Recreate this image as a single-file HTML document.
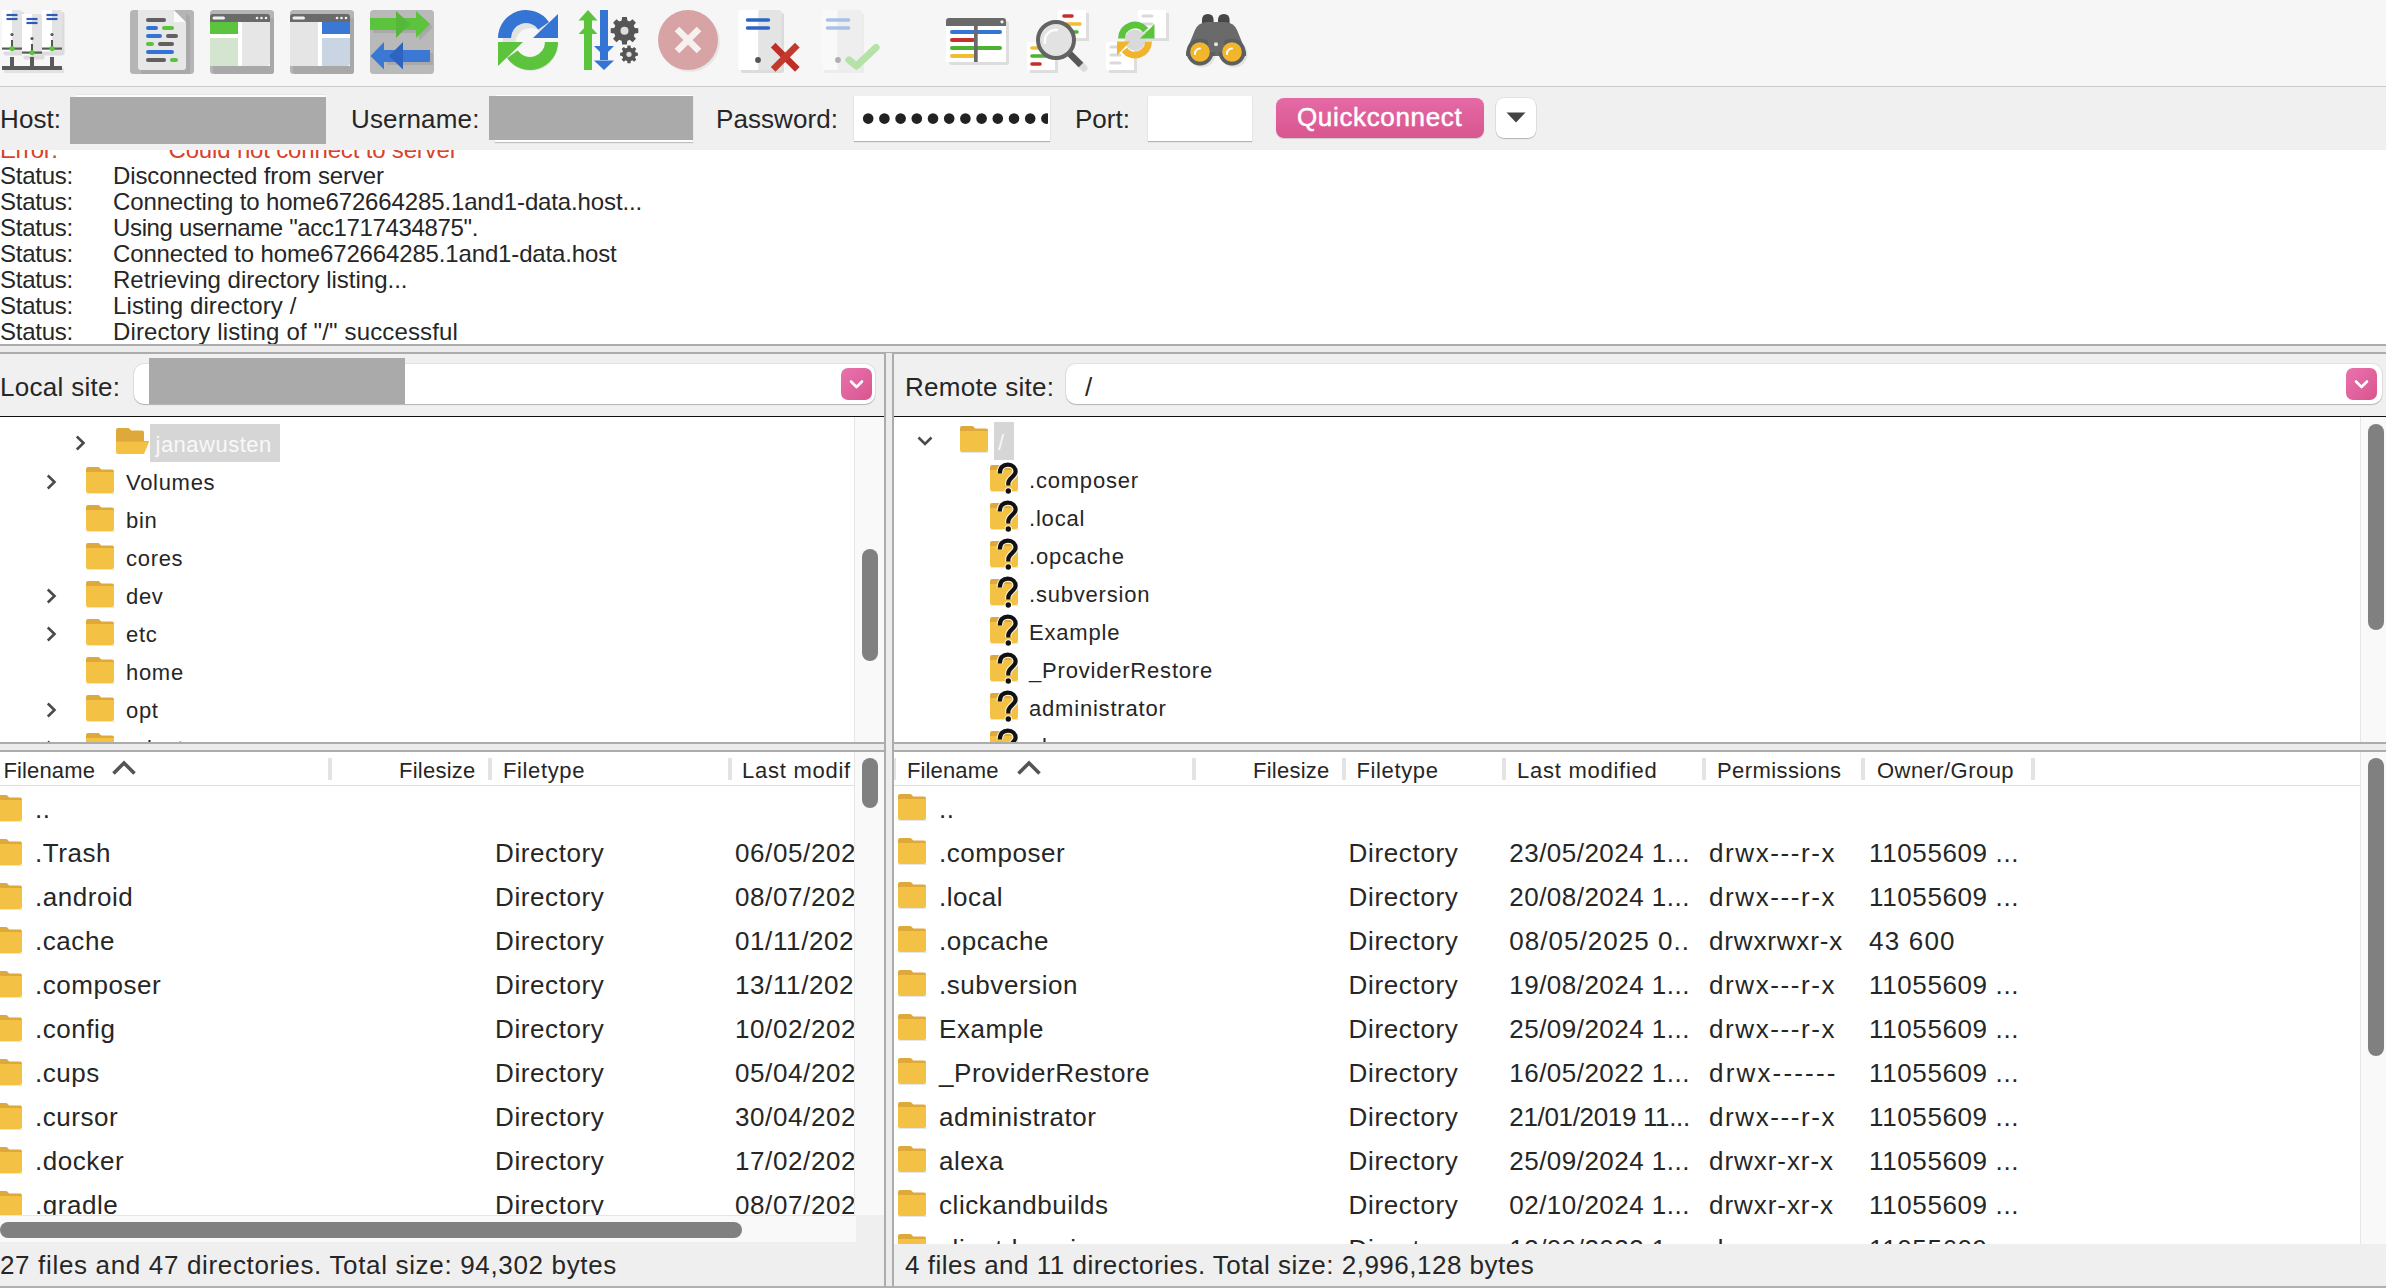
<!DOCTYPE html><html><head><meta charset="utf-8"><style>
html,body{margin:0;padding:0;overflow:hidden;}
body{width:2386px;height:1288px;position:relative;background:#fff;font-family:"Liberation Sans",sans-serif;}
.t{position:absolute;white-space:nowrap;line-height:1;}
.r{position:absolute;}
svg{position:absolute;overflow:visible;}
</style></head><body>
<div class="r" style="left:0px;top:0px;width:2386px;height:86px;background:#f6f6f6;"></div>
<svg style="left:0;top:0" width="1270" height="86" viewBox="0 0 1270 86"><rect x="4" y="68" width="60" height="5" rx="0" fill="#e2e2e2" /><rect x="3.5" y="12" width="21" height="43.5" rx="2" fill="#dcdcdc" /><rect x="2" y="10" width="10" height="41.5" rx="0" fill="#ffffff" /><path d="M12 10 H20 Q22 10 22 12 V51.5 H12 Z" fill="#e3e3e3" /><line x1="6.5" y1="15" x2="17.5" y2="15" stroke="#2c5db3" stroke-width="2.2" stroke-linecap="butt"/><line x1="6.5" y1="19" x2="17.5" y2="19" stroke="#2c5db3" stroke-width="2.2" stroke-linecap="butt"/><circle cx="12" cy="34.5" r="1.6" fill="#555" /><rect x="11" y="40.0" width="2" height="8" rx="0" fill="#555" /><rect x="2" y="47.5" width="20" height="2.2" rx="0" fill="#5a5a5a" /><circle cx="12" cy="48.6" r="2.6" fill="#5cc33d" /><rect x="23.5" y="16" width="21" height="43.5" rx="2" fill="#dcdcdc" /><rect x="22" y="14" width="10" height="41.5" rx="0" fill="#ffffff" /><path d="M32 14 H40 Q42 14 42 16 V55.5 H32 Z" fill="#e3e3e3" /><line x1="26.5" y1="19" x2="37.5" y2="19" stroke="#2c5db3" stroke-width="2.2" stroke-linecap="butt"/><line x1="26.5" y1="23" x2="37.5" y2="23" stroke="#2c5db3" stroke-width="2.2" stroke-linecap="butt"/><circle cx="32" cy="38.5" r="1.6" fill="#555" /><rect x="31" y="44.0" width="2" height="8" rx="0" fill="#555" /><rect x="22" y="51.5" width="20" height="2.2" rx="0" fill="#5a5a5a" /><circle cx="32" cy="52.6" r="2.6" fill="#5cc33d" /><rect x="43.5" y="12" width="21" height="43.5" rx="2" fill="#dcdcdc" /><rect x="42" y="10" width="10" height="41.5" rx="0" fill="#ffffff" /><path d="M52 10 H60 Q62 10 62 12 V51.5 H52 Z" fill="#e3e3e3" /><line x1="46.5" y1="15" x2="57.5" y2="15" stroke="#2c5db3" stroke-width="2.2" stroke-linecap="butt"/><line x1="46.5" y1="19" x2="57.5" y2="19" stroke="#2c5db3" stroke-width="2.2" stroke-linecap="butt"/><circle cx="52" cy="34.5" r="1.6" fill="#555" /><rect x="51" y="40.0" width="2" height="8" rx="0" fill="#555" /><rect x="42" y="47.5" width="20" height="2.2" rx="0" fill="#5a5a5a" /><circle cx="52" cy="48.6" r="2.6" fill="#5cc33d" /><rect x="10" y="57" width="4" height="10" rx="0" fill="#5a5a5a" /><rect x="30" y="57" width="4" height="10" rx="0" fill="#5a5a5a" /><rect x="50" y="57" width="4" height="10" rx="0" fill="#5a5a5a" /><rect x="2" y="66" width="60" height="4" rx="0" fill="#5a5a5a" /><rect x="130" y="10" width="64" height="64" rx="3.5" fill="#b5b5b5" /><path d="M141 13 H186 L190 17 V73 Q190 74 189 74 H141 Z" fill="#a9a9a9" /><path d="M138 10 H174 L186 22 V67 Q186 70 183 70 H141 Q138 70 138 67 Z" fill="#e7e7e7" /><polygon points="174,10 186,22 174,22" fill="#fbfbfb" /><polygon points="174,10 186,10 186,22" fill="#b5b5b5" /><line x1="148" y1="20" x2="164" y2="20" stroke="#606060" stroke-width="4" stroke-linecap="round"/><line x1="148" y1="28" x2="156" y2="28" stroke="#3474d4" stroke-width="4" stroke-linecap="round"/><line x1="164" y1="28" x2="172" y2="28" stroke="#5cc33d" stroke-width="4" stroke-linecap="round"/><line x1="148" y1="36" x2="160" y2="36" stroke="#3474d4" stroke-width="4" stroke-linecap="round"/><line x1="168" y1="36" x2="176" y2="36" stroke="#606060" stroke-width="4" stroke-linecap="round"/><line x1="148" y1="44" x2="152" y2="44" stroke="#5cc33d" stroke-width="4" stroke-linecap="round"/><line x1="160" y1="44" x2="172" y2="44" stroke="#606060" stroke-width="4" stroke-linecap="round"/><line x1="148" y1="52" x2="172" y2="52" stroke="#3474d4" stroke-width="4" stroke-linecap="round"/><line x1="148" y1="60" x2="164" y2="60" stroke="#606060" stroke-width="4" stroke-linecap="round"/><line x1="172" y1="60" x2="176" y2="60" stroke="#5cc33d" stroke-width="4" stroke-linecap="round"/><rect x="210" y="10" width="64" height="64" rx="3.5" fill="#b5b5b5" /><path d="M213 18 H274 V71 Q274 74 271 74 H216 Q213 74 213 71 Z" fill="#a8a8a8" /><path d="M210 17 Q210 14 213 14 H267 Q270 14 270 17 V22 H210 Z" fill="#6a6a6a" /><rect x="212.5" y="16.5" width="12.5" height="3" rx="1.5" fill="#f0f0f0" /><circle cx="257" cy="18" r="1.3" fill="#f0f0f0" /><circle cx="261.5" cy="18" r="1.3" fill="#f0f0f0" /><circle cx="266" cy="18" r="1.3" fill="#f0f0f0" /><rect x="210" y="22" width="60" height="44" rx="0" fill="#ffffff" /><path d="M210 22 H270 V63 Q270 66 267 66 H210 Z" fill="#ffffff" /><rect x="210" y="22" width="28" height="12" rx="0" fill="#5bc43e" /><rect x="210" y="38" width="28" height="28" rx="0" fill="#d3e5cf" /><path d="M242 22 H270 V63 Q270 66 267 66 H242 Z" fill="#e6e6e6" /><rect x="290" y="10" width="64" height="64" rx="3.5" fill="#b5b5b5" /><path d="M293 18 H354 V71 Q354 74 351 74 H296 Q293 74 293 71 Z" fill="#a8a8a8" /><path d="M290 17 Q290 14 293 14 H347 Q350 14 350 17 V22 H290 Z" fill="#6a6a6a" /><rect x="292.5" y="16.5" width="12.5" height="3" rx="1.5" fill="#f0f0f0" /><circle cx="337" cy="18" r="1.3" fill="#f0f0f0" /><circle cx="341.5" cy="18" r="1.3" fill="#f0f0f0" /><circle cx="346" cy="18" r="1.3" fill="#f0f0f0" /><rect x="290" y="22" width="60" height="44" rx="0" fill="#ffffff" /><path d="M290 22 H350 V63 Q350 66 347 66 H290 Z" fill="#ffffff" /><rect x="290" y="22" width="28" height="44" rx="0" fill="#e5e5e5" /><rect x="322" y="22" width="28" height="12" rx="0" fill="#3a78d3" /><path d="M322 38 H350 V63 Q350 66 347 66 H322 Z" fill="#c9d5e2" /><rect x="370" y="10" width="64" height="64" rx="3.5" fill="#b9b9b9" /><polygon points="373,21 419,21 419,14 433,27 419,41 419,33 373,33" fill="#a9a9a9" /><rect x="370" y="18" width="46" height="12" rx="0" fill="#5cc33d" /><polygon points="396,11 410,24 396,38" fill="#55b83a" /><polygon points="416,11 430,24 416,38" fill="#5cc33d" /><polygon points="387,53 433,53 433,65 387,65" fill="#a9a9a9" /><rect x="384" y="50" width="46" height="12" rx="0" fill="#3a78d4" /><polygon points="403,42 389,56 403,69.5" fill="#2e63c2" /><polygon points="384,42 370.5,56 384,69.5" fill="#3a78d4" /><path d="M499.50 40.00 A28 28 0 0 1 551.75 26.00 L540.49 32.50 A15 15 0 0 0 512.50 40.00 Z" fill="#000" opacity="0.08" transform="translate(3,3)"/><path d="M555.50 40.00 A28 28 0 0 1 503.25 54.00 L514.51 47.50 A15 15 0 0 0 542.50 40.00 Z" fill="#000" opacity="0.08" transform="translate(3,3)"/><path d="M498.00 38.00 A28 28 0 0 1 548.94 21.94 L538.29 29.40 A15 15 0 0 0 511.00 38.00 Z" fill="#3474d4" /><polygon points="533,38 558,38 558,14" fill="#3474d4" /><path d="M558.00 42.00 A28 28 0 0 1 507.06 58.06 L517.71 50.60 A15 15 0 0 0 545.00 42.00 Z" fill="#5cc33d" /><polygon points="523,42 498,42 498,66" fill="#5cc33d" /><rect x="584" y="20" width="8" height="50" rx="0" fill="#5cc33d" /><polygon points="578.5,20.5 588,10 597.5,20.5" fill="#5cc33d" /><polygon points="578.5,34 588,24 597.5,34" fill="#5cc33d" /><rect x="600" y="10" width="8" height="50" rx="0" fill="#3474d4" /><polygon points="594,46 604,56 614,46" fill="#3474d4" /><polygon points="594,60.5 604,70 614,60.5" fill="#3474d4" /><polygon points="634.62,27.9 638.29,28.29 638.29,33.11 634.62,33.5 633.64,35.88 635.95,38.75 632.55,42.15 629.68,39.84 627.3,40.82 626.91,44.49 622.09,44.49 621.7,40.82 619.32,39.84 616.45,42.15 613.05,38.75 615.36,35.88 614.38,33.5 610.71,33.11 610.71,28.29 614.38,27.9 615.36,25.52 613.05,22.65 616.45,19.25 619.32,21.56 621.7,20.58 622.09,16.91 626.91,16.91 627.3,20.58 629.68,21.56 632.55,19.25 635.95,22.65 633.64,25.52" fill="#555" /><circle cx="624.5" cy="30.7" r="10.29" fill="#555" /><circle cx="624.5" cy="30.7" r="4" fill="#dedede" /><polygon points="635.55,52.49 637.87,52.75 637.87,55.85 635.55,56.11 634.92,57.65 636.36,59.48 634.18,61.66 632.35,60.22 630.81,60.85 630.55,63.17 627.45,63.17 627.19,60.85 625.65,60.22 623.82,61.66 621.64,59.48 623.08,57.65 622.45,56.11 620.13,55.85 620.13,52.75 622.45,52.49 623.08,50.95 621.64,49.12 623.82,46.94 625.65,48.38 627.19,47.75 627.45,45.43 630.55,45.43 630.81,47.75 632.35,48.38 634.18,46.94 636.36,49.12 634.92,50.95" fill="#555" /><circle cx="629" cy="54.3" r="6.664" fill="#555" /><circle cx="629" cy="54.3" r="2.6" fill="#dedede" /><circle cx="690" cy="42" r="30" fill="#000" opacity="0.06"/><circle cx="688" cy="40" r="30" fill="#d8a3a5" /><line x1="677" y1="29" x2="699" y2="51" stroke="#f6f1ef" stroke-width="6.5" stroke-linecap="butt"/><line x1="699" y1="29" x2="677" y2="51" stroke="#f6f1ef" stroke-width="6.5" stroke-linecap="butt"/><rect x="741" y="13" width="43" height="60" rx="2" fill="#dcdcdc" /><rect x="738.5" y="10" width="20" height="60" rx="0" fill="#ffffff" /><path d="M758.5 10 H779 Q781.5 10 781.5 12.5 V70 H758.5 Z" fill="#e4e4e4" /><line x1="747.5" y1="20" x2="768.5" y2="20" stroke="#2c66c4" stroke-width="3.5" stroke-linecap="round"/><line x1="747.5" y1="28" x2="768.5" y2="28" stroke="#2c66c4" stroke-width="3.5" stroke-linecap="round"/><circle cx="758" cy="60" r="2.9" fill="#555" /><line x1="775.5" y1="47.5" x2="795" y2="67" stroke="#bd3029" stroke-width="6.6" stroke-linecap="square"/><line x1="795" y1="47.5" x2="775.5" y2="67" stroke="#c23a2c" stroke-width="6.6" stroke-linecap="square"/><rect x="824" y="13" width="40" height="60" rx="2" fill="#ececec" /><rect x="822" y="10" width="16" height="60" rx="0" fill="#f9f9f9" /><path d="M837.5 10 H859 Q861 10 861 12 V70 H837.5 Z" fill="#eeeeee" /><line x1="827.5" y1="20" x2="848.5" y2="20" stroke="#a9c0e6" stroke-width="3.5" stroke-linecap="round"/><line x1="827.5" y1="28" x2="848.5" y2="28" stroke="#a9c0e6" stroke-width="3.5" stroke-linecap="round"/><circle cx="838" cy="60" r="2.9" fill="#b0b0b0" /><polyline points="849,60 856.5,66 876,47.5" stroke="#b5e2a6" stroke-width="7.2" fill="none" stroke-linecap="round" stroke-linejoin="round"/><rect x="949" y="21" width="60" height="44" rx="3" fill="#dddddd" /><path d="M946 21 Q946 18 949 18 H1003 Q1006 18 1006 21 V26 H946 Z" fill="#6a6a6a" /><rect x="946" y="26" width="60" height="36" rx="0" fill="#ffffff" /><circle cx="1002" cy="21.8" r="1.6" fill="#f3f3f3" /><line x1="952" y1="32" x2="1000" y2="32" stroke="#3474d4" stroke-width="4" stroke-linecap="round"/><line x1="952" y1="40" x2="973" y2="40" stroke="#c4312b" stroke-width="4" stroke-linecap="round"/><line x1="952" y1="48" x2="1000" y2="48" stroke="#4bb232" stroke-width="4" stroke-linecap="round"/><line x1="952" y1="56" x2="973" y2="56" stroke="#f3bd31" stroke-width="4" stroke-linecap="round"/><rect x="974" y="26" width="3.7" height="36" rx="0" fill="#6a6a6a" /><rect x="1061" y="13" width="28" height="28" rx="0" fill="#dedede" /><rect x="1058" y="10" width="28" height="28" rx="0" fill="#ffffff" /><line x1="1064" y1="16" x2="1072" y2="16" stroke="#c4312b" stroke-width="3.6" stroke-linecap="round"/><line x1="1064" y1="24" x2="1080" y2="24" stroke="#f3bd31" stroke-width="3.6" stroke-linecap="round"/><line x1="1064" y1="32" x2="1077" y2="32" stroke="#4bb232" stroke-width="3.6" stroke-linecap="round"/><rect x="1030" y="45" width="28" height="28" rx="0" fill="#dedede" /><rect x="1027" y="42" width="28" height="28" rx="0" fill="#ffffff" /><line x1="1032" y1="48" x2="1041" y2="48" stroke="#f3bd31" stroke-width="3.6" stroke-linecap="round"/><line x1="1032" y1="56" x2="1046" y2="56" stroke="#4bb232" stroke-width="3.6" stroke-linecap="round"/><line x1="1032" y1="64" x2="1040" y2="64" stroke="#c4312b" stroke-width="3.6" stroke-linecap="round"/><line x1="1070" y1="54" x2="1082" y2="66" stroke="#000" stroke-width="7" stroke-linecap="round" opacity="0.1" transform="translate(2,2)"/><line x1="1069" y1="53" x2="1081" y2="65" stroke="#575757" stroke-width="6.5" stroke-linecap="butt"/><circle cx="1056" cy="40" r="18" fill="#e2e2e2" stroke="#636363" stroke-width="4"/><path d="M1045 43 A11 11 0 0 1 1057 30" fill="none" stroke="#fff" stroke-width="2.5" stroke-linecap="round" opacity="0.9"/><rect x="1141" y="13" width="28" height="28" rx="0" fill="#dedede" /><rect x="1138" y="10" width="28" height="28" rx="0" fill="#ffffff" /><line x1="1143" y1="16" x2="1152" y2="16" stroke="#dadada" stroke-width="3" stroke-linecap="round"/><line x1="1143" y1="24" x2="1152" y2="24" stroke="#dadada" stroke-width="3" stroke-linecap="round"/><line x1="1143" y1="32" x2="1152" y2="32" stroke="#dadada" stroke-width="3" stroke-linecap="round"/><rect x="1109" y="45" width="28" height="28" rx="0" fill="#dedede" /><rect x="1106" y="42" width="28" height="28" rx="0" fill="#ffffff" /><line x1="1111" y1="47" x2="1120" y2="47" stroke="#dadada" stroke-width="3" stroke-linecap="round"/><line x1="1111" y1="55" x2="1120" y2="55" stroke="#dadada" stroke-width="3" stroke-linecap="round"/><line x1="1111" y1="63" x2="1120" y2="63" stroke="#dadada" stroke-width="3" stroke-linecap="round"/><circle cx="1135" cy="40" r="10.5" fill="#d9d9d9" /><path d="M1118.00 38.50 A17 17 0 0 1 1148.40 28.03 L1142.88 32.34 A10 10 0 0 0 1125.00 38.50 Z" fill="#5cc33d" /><polygon points="1140,38.5 1154.5,38.5 1154.5,24" fill="#5cc33d" /><path d="M1152.00 41.50 A17 17 0 0 1 1121.60 51.97 L1127.12 47.66 A10 10 0 0 0 1145.00 41.50 Z" fill="#f0b52d" /><polygon points="1130,41.5 1117,41.5 1117,55.5" fill="#f0b52d" /><path d="M1202 20 Q1202 14 1207.8 14 Q1213.6 14 1213.6 20 V30 H1202 Z" fill="#474747" /><path d="M1218 20 Q1218 14 1223.8 14 Q1229.6 14 1229.6 20 V30 H1218 Z" fill="#474747" /><path d="M1186 52 L1195 30 Q1198 23 1206 22 H1226 Q1234 23 1237 30 L1246 52 V56 H1186 Z" fill="#6a6a6a" /><circle cx="1202" cy="54" r="13.5" fill="#000" opacity="0.08"/><circle cx="1234" cy="54" r="13.5" fill="#000" opacity="0.08"/><circle cx="1200" cy="52" r="13.5" fill="#5c5f5f" /><circle cx="1232" cy="52" r="13.5" fill="#5c5f5f" /><rect x="1208" y="38" width="16" height="14" rx="0" fill="#6a6a6a" /><circle cx="1216" cy="44.2" r="2" fill="#e6e6e6" /><circle cx="1200" cy="52" r="9.8" fill="#f2b52c" /><circle cx="1232" cy="52" r="9.8" fill="#f2b52c" /><path d="M1195 54 A5 5 0 0 1 1200 48.5" fill="none" stroke="#fff" stroke-width="2" stroke-linecap="round"/><path d="M1227 54 A5 5 0 0 1 1232 48.5" fill="none" stroke="#fff" stroke-width="2" stroke-linecap="round"/></svg>
<div class="r" style="left:0px;top:86px;width:2386px;height:1px;background:#c9c9c9;"></div>
<div class="r" style="left:0px;top:87px;width:2386px;height:63px;background:#f0f0f0;"></div>
<div class="t" style="left:0.0px;top:106.0px;font-size:26px;color:#262626;letter-spacing:0.1px;">Host:</div>
<div class="r" style="left:76px;top:95px;width:250px;height:3px;background:#fdfdfd;box-shadow:0 -0.5px 0 rgba(0,0,0,0.08);"></div>
<div class="r" style="left:70px;top:97px;width:256px;height:47px;background:#aaaaaa;"></div>
<div class="t" style="left:351.0px;top:106.0px;font-size:26px;color:#262626;letter-spacing:0.15px;">Username:</div>
<div class="r" style="left:495px;top:95px;width:198px;height:47px;background:#fdfdfd;box-shadow:0 1px 1px rgba(0,0,0,0.2);"></div>
<div class="r" style="left:489px;top:96px;width:204px;height:44px;background:#aaaaaa;"></div>
<div class="t" style="left:716.0px;top:106.0px;font-size:26px;color:#262626;letter-spacing:0.07px;">Password:</div>
<div class="r" style="left:854px;top:96px;width:196px;height:45px;background:#ffffff;box-shadow:0 1px 1px rgba(0,0,0,0.25);"></div>
<svg style="left:854px;top:96px;overflow:hidden;" width="196" height="45" viewBox="0 0 196 45"><circle cx="14.2" cy="22.6" r="5.3" fill="#222"/><circle cx="30.4" cy="22.6" r="5.3" fill="#222"/><circle cx="46.6" cy="22.6" r="5.3" fill="#222"/><circle cx="62.8" cy="22.6" r="5.3" fill="#222"/><circle cx="79.0" cy="22.6" r="5.3" fill="#222"/><circle cx="95.2" cy="22.6" r="5.3" fill="#222"/><circle cx="111.4" cy="22.6" r="5.3" fill="#222"/><circle cx="127.6" cy="22.6" r="5.3" fill="#222"/><circle cx="143.8" cy="22.6" r="5.3" fill="#222"/><circle cx="160.0" cy="22.6" r="5.3" fill="#222"/><circle cx="176.2" cy="22.6" r="5.3" fill="#222"/><circle cx="192.4" cy="22.6" r="5.3" fill="#222"/><rect x="194" y="0" width="2" height="45" fill="#fff"/></svg>
<div class="t" style="left:1075.0px;top:106.0px;font-size:26px;color:#262626;">Port:</div>
<div class="r" style="left:1148px;top:96px;width:104px;height:45px;background:#ffffff;box-shadow:0 1px 1px rgba(0,0,0,0.25);"></div>
<div class="r" style="left:1276px;top:98px;width:208px;height:40px;background:linear-gradient(#e46aa5,#d9568f);border-radius:8px;box-shadow:0 0.5px 1px rgba(0,0,0,0.15);"></div>
<div class="t" style="left:1297.0px;top:103.6px;font-size:26px;color:#ffffff;letter-spacing:0.65px;-webkit-text-stroke:0.5px #fff;">Quickconnect</div>
<div class="r" style="left:1496px;top:98px;width:40px;height:40px;background:#ffffff;border-radius:8px;box-shadow:0 0 0 0.5px rgba(0,0,0,0.12),0 1px 1px rgba(0,0,0,0.2);"></div>
<svg style="left:1496px;top:98px;" width="40" height="40" viewBox="0 0 40 40"><path d="M10.5 14.5 L29.5 14.5 L20 24.5 Z" fill="#444"/></svg>
<div class="r" style="left:0px;top:150px;width:2386px;height:195px;overflow:hidden;background:#ffffff">
<div class="t" style="left:0.0px;top:-12.0px;font-size:24px;color:#d8432a;letter-spacing:-0.422px;">Error:</div>
<div class="t" style="left:168.5px;top:-12.0px;font-size:24px;color:#d8432a;letter-spacing:-0.166px;">Could not connect to server</div>
<div class="t" style="left:0.0px;top:14.0px;font-size:24px;color:#262626;letter-spacing:-0.246px;">Status:</div>
<div class="t" style="left:113.0px;top:14.0px;font-size:24px;color:#262626;letter-spacing:-0.102px;">Disconnected from server</div>
<div class="t" style="left:0.0px;top:40.0px;font-size:24px;color:#262626;letter-spacing:-0.246px;">Status:</div>
<div class="t" style="left:113.0px;top:40.0px;font-size:24px;color:#262626;letter-spacing:-0.131px;">Connecting to home672664285.1and1-data.host...</div>
<div class="t" style="left:0.0px;top:66.0px;font-size:24px;color:#262626;letter-spacing:-0.246px;">Status:</div>
<div class="t" style="left:113.0px;top:66.0px;font-size:24px;color:#262626;letter-spacing:-0.351px;">Using username &quot;acc1717434875&quot;.</div>
<div class="t" style="left:0.0px;top:92.0px;font-size:24px;color:#262626;letter-spacing:-0.246px;">Status:</div>
<div class="t" style="left:113.0px;top:92.0px;font-size:24px;color:#262626;letter-spacing:-0.147px;">Connected to home672664285.1and1-data.host</div>
<div class="t" style="left:0.0px;top:118.0px;font-size:24px;color:#262626;letter-spacing:-0.246px;">Status:</div>
<div class="t" style="left:113.0px;top:118.0px;font-size:24px;color:#262626;letter-spacing:-0.009px;">Retrieving directory listing...</div>
<div class="t" style="left:0.0px;top:144.0px;font-size:24px;color:#262626;letter-spacing:-0.246px;">Status:</div>
<div class="t" style="left:113.0px;top:144.0px;font-size:24px;color:#262626;letter-spacing:0.11px;">Listing directory /</div>
<div class="t" style="left:0.0px;top:170.0px;font-size:24px;color:#262626;letter-spacing:-0.246px;">Status:</div>
<div class="t" style="left:113.0px;top:170.0px;font-size:24px;color:#262626;letter-spacing:0.149px;">Directory listing of &quot;/&quot; successful</div>
</div>
<div class="r" style="left:0px;top:345px;width:2386px;height:8px;background:#ececec;"></div>
<div class="r" style="left:0px;top:344px;width:2386px;height:2px;background:#acacac;"></div>
<div class="r" style="left:0px;top:352px;width:2386px;height:2px;background:#acacac;"></div>
<div class="r" style="left:885px;top:353px;width:8px;height:935px;background:#ececec;"></div>
<div class="r" style="left:884px;top:353px;width:2px;height:935px;background:#acacac;"></div>
<div class="r" style="left:892px;top:353px;width:2px;height:935px;background:#acacac;"></div>
<div class="r" style="left:0px;top:354px;width:884px;height:62px;background:#f0f0f0;"></div>
<div class="r" style="left:894px;top:354px;width:1492px;height:62px;background:#f0f0f0;"></div>
<div class="t" style="left:0.0px;top:374.0px;font-size:26px;color:#262626;letter-spacing:0.3px;">Local site:</div>
<div class="r" style="left:134px;top:364px;width:741px;height:40px;background:#ffffff;border-radius:10px;box-shadow:0 0 0 1px rgba(0,0,0,0.06),0 1px 1px rgba(0,0,0,0.2);"></div>
<div class="r" style="left:149px;top:358px;width:256px;height:46px;background:#aaaaaa;"></div>
<div class="r" style="left:841px;top:368px;width:31px;height:32px;background:linear-gradient(135deg,#e873ad,#d9558f);border-radius:7px;"></div>
<svg style="left:841px;top:368px;" width="31" height="32" viewBox="0 0 31 32"><path d="M10 13.5 L15.5 19 L21 13.5" stroke="#fff" stroke-width="2.6" fill="none" stroke-linecap="round" stroke-linejoin="round"/></svg>
<div class="t" style="left:905.0px;top:374.0px;font-size:26px;color:#262626;letter-spacing:0.28px;">Remote site:</div>
<div class="r" style="left:1066px;top:364px;width:1316px;height:40px;background:#ffffff;border-radius:10px;box-shadow:0 0 0 1px rgba(0,0,0,0.06),0 1px 1px rgba(0,0,0,0.2);"></div>
<div class="t" style="left:1085.0px;top:374.0px;font-size:26px;color:#262626;">/</div>
<div class="r" style="left:2346px;top:368px;width:31px;height:32px;background:linear-gradient(135deg,#e873ad,#d9558f);border-radius:7px;"></div>
<svg style="left:2346px;top:368px;" width="31" height="32" viewBox="0 0 31 32"><path d="M10 13.5 L15.5 19 L21 13.5" stroke="#fff" stroke-width="2.6" fill="none" stroke-linecap="round" stroke-linejoin="round"/></svg>
<div class="r" style="left:0px;top:416px;width:884px;height:2px;background:#111;"></div>
<div class="r" style="left:894px;top:416px;width:1492px;height:2px;background:#111;"></div>
<div class="r" style="left:0px;top:417px;width:884px;height:326px;overflow:hidden;background:#ffffff">
<div class="r" style="left:854px;top:0px;width:30px;height:326px;background:#f9f9f9;"></div>
<div class="r" style="left:854px;top:0px;width:1px;height:326px;background:#e6e6e6;"></div>
<div class="r" style="left:862px;top:132px;width:16px;height:112px;background:#808080;border-radius:8px;"></div>
<svg style="left:75px;top:18px;" width="12" height="16" viewBox="0 0 12 16"><path d="M1.8 1.5 L8.5 8 L1.8 14.5" stroke="#4a4a4a" stroke-width="2.6" fill="none"/></svg>
<svg style="left:116px;top:11px;" width="33" height="27" viewBox="0 0 33 27"><path d="M0 2.2 Q0 0 2 0 H12 Q13 0 14 1.2 L15.3 2.6 H26 Q28 2.6 28 4.6 V20 H0 Z" fill="#dea83a"/><path d="M0 14 H33 L28 26 H2 Q0 26 0 24 Z" fill="#f3c143"/><path d="M0 13 H33 V14 H0Z" fill="#e9b23e"/></svg>
<div class="r" style="left:150px;top:7px;width:130px;height:38px;background:#d6d6d6;"></div>
<div class="t" style="left:155.5px;top:17.0px;font-size:22px;color:#f9f9f9;letter-spacing:0.5px;">janawusten</div>
<svg style="left:46px;top:56.5px;" width="12" height="16" viewBox="0 0 12 16"><path d="M1.8 1.5 L8.5 8 L1.8 14.5" stroke="#4a4a4a" stroke-width="2.6" fill="none"/></svg>
<svg style="left:86px;top:49.5px;" width="28" height="26" viewBox="0 0 28 26"><path d="M0 2.2 Q0 0 2 0 H12 Q13 0 14 1.2 L15.3 2.6 H26 Q28 2.6 28 4.6 V12 H0 Z" fill="#dea83a"/><path d="M0 5 H28 V24 Q28 26 26 26 H2 Q0 26 0 24 Z" fill="#f3c143"/><rect x="0.5" y="26" width="28" height="1" fill="#e3e6ea"/></svg>
<div class="t" style="left:126.0px;top:55.0px;font-size:22px;color:#262626;letter-spacing:0.7px;">Volumes</div>
<svg style="left:86px;top:87.5px;" width="28" height="26" viewBox="0 0 28 26"><path d="M0 2.2 Q0 0 2 0 H12 Q13 0 14 1.2 L15.3 2.6 H26 Q28 2.6 28 4.6 V12 H0 Z" fill="#dea83a"/><path d="M0 5 H28 V24 Q28 26 26 26 H2 Q0 26 0 24 Z" fill="#f3c143"/><rect x="0.5" y="26" width="28" height="1" fill="#e3e6ea"/></svg>
<div class="t" style="left:126.0px;top:93.0px;font-size:22px;color:#262626;letter-spacing:0.7px;">bin</div>
<svg style="left:86px;top:125.5px;" width="28" height="26" viewBox="0 0 28 26"><path d="M0 2.2 Q0 0 2 0 H12 Q13 0 14 1.2 L15.3 2.6 H26 Q28 2.6 28 4.6 V12 H0 Z" fill="#dea83a"/><path d="M0 5 H28 V24 Q28 26 26 26 H2 Q0 26 0 24 Z" fill="#f3c143"/><rect x="0.5" y="26" width="28" height="1" fill="#e3e6ea"/></svg>
<div class="t" style="left:126.0px;top:131.0px;font-size:22px;color:#262626;letter-spacing:0.7px;">cores</div>
<svg style="left:46px;top:170.5px;" width="12" height="16" viewBox="0 0 12 16"><path d="M1.8 1.5 L8.5 8 L1.8 14.5" stroke="#4a4a4a" stroke-width="2.6" fill="none"/></svg>
<svg style="left:86px;top:163.5px;" width="28" height="26" viewBox="0 0 28 26"><path d="M0 2.2 Q0 0 2 0 H12 Q13 0 14 1.2 L15.3 2.6 H26 Q28 2.6 28 4.6 V12 H0 Z" fill="#dea83a"/><path d="M0 5 H28 V24 Q28 26 26 26 H2 Q0 26 0 24 Z" fill="#f3c143"/><rect x="0.5" y="26" width="28" height="1" fill="#e3e6ea"/></svg>
<div class="t" style="left:126.0px;top:169.0px;font-size:22px;color:#262626;letter-spacing:0.7px;">dev</div>
<svg style="left:46px;top:208.5px;" width="12" height="16" viewBox="0 0 12 16"><path d="M1.8 1.5 L8.5 8 L1.8 14.5" stroke="#4a4a4a" stroke-width="2.6" fill="none"/></svg>
<svg style="left:86px;top:201.5px;" width="28" height="26" viewBox="0 0 28 26"><path d="M0 2.2 Q0 0 2 0 H12 Q13 0 14 1.2 L15.3 2.6 H26 Q28 2.6 28 4.6 V12 H0 Z" fill="#dea83a"/><path d="M0 5 H28 V24 Q28 26 26 26 H2 Q0 26 0 24 Z" fill="#f3c143"/><rect x="0.5" y="26" width="28" height="1" fill="#e3e6ea"/></svg>
<div class="t" style="left:126.0px;top:207.0px;font-size:22px;color:#262626;letter-spacing:0.7px;">etc</div>
<svg style="left:86px;top:239.5px;" width="28" height="26" viewBox="0 0 28 26"><path d="M0 2.2 Q0 0 2 0 H12 Q13 0 14 1.2 L15.3 2.6 H26 Q28 2.6 28 4.6 V12 H0 Z" fill="#dea83a"/><path d="M0 5 H28 V24 Q28 26 26 26 H2 Q0 26 0 24 Z" fill="#f3c143"/><rect x="0.5" y="26" width="28" height="1" fill="#e3e6ea"/></svg>
<div class="t" style="left:126.0px;top:245.0px;font-size:22px;color:#262626;letter-spacing:0.7px;">home</div>
<svg style="left:46px;top:284.5px;" width="12" height="16" viewBox="0 0 12 16"><path d="M1.8 1.5 L8.5 8 L1.8 14.5" stroke="#4a4a4a" stroke-width="2.6" fill="none"/></svg>
<svg style="left:86px;top:277.5px;" width="28" height="26" viewBox="0 0 28 26"><path d="M0 2.2 Q0 0 2 0 H12 Q13 0 14 1.2 L15.3 2.6 H26 Q28 2.6 28 4.6 V12 H0 Z" fill="#dea83a"/><path d="M0 5 H28 V24 Q28 26 26 26 H2 Q0 26 0 24 Z" fill="#f3c143"/><rect x="0.5" y="26" width="28" height="1" fill="#e3e6ea"/></svg>
<div class="t" style="left:126.0px;top:283.0px;font-size:22px;color:#262626;letter-spacing:0.7px;">opt</div>
<svg style="left:46px;top:322.5px;" width="12" height="16" viewBox="0 0 12 16"><path d="M1.8 1.5 L8.5 8 L1.8 14.5" stroke="#4a4a4a" stroke-width="2.6" fill="none"/></svg>
<svg style="left:86px;top:315.5px;" width="28" height="26" viewBox="0 0 28 26"><path d="M0 2.2 Q0 0 2 0 H12 Q13 0 14 1.2 L15.3 2.6 H26 Q28 2.6 28 4.6 V12 H0 Z" fill="#dea83a"/><path d="M0 5 H28 V24 Q28 26 26 26 H2 Q0 26 0 24 Z" fill="#f3c143"/><rect x="0.5" y="26" width="28" height="1" fill="#e3e6ea"/></svg>
<div class="t" style="left:126.0px;top:321.0px;font-size:22px;color:#262626;letter-spacing:0.7px;">private</div>
</div>
<div class="r" style="left:894px;top:417px;width:1492px;height:326px;overflow:hidden;background:#ffffff">
<div class="r" style="left:1466px;top:0px;width:26px;height:326px;background:#f9f9f9;"></div>
<div class="r" style="left:1466px;top:0px;width:1px;height:326px;background:#e6e6e6;"></div>
<div class="r" style="left:1474px;top:7px;width:16px;height:206px;background:#808080;border-radius:8px;"></div>
<svg style="left:23px;top:19px;" width="16" height="10" viewBox="0 0 16 10"><path d="M1.5 1.5 L8 8 L14.5 1.5" stroke="#4a4a4a" stroke-width="2.6" fill="none"/></svg>
<svg style="left:66px;top:9px;" width="28" height="26" viewBox="0 0 28 26"><path d="M0 2.2 Q0 0 2 0 H12 Q13 0 14 1.2 L15.3 2.6 H26 Q28 2.6 28 4.6 V12 H0 Z" fill="#dea83a"/><path d="M0 5 H28 V24 Q28 26 26 26 H2 Q0 26 0 24 Z" fill="#f3c143"/><rect x="0.5" y="26" width="28" height="1" fill="#e3e6ea"/></svg>
<div class="r" style="left:100px;top:5px;width:20px;height:38px;background:#d6d6d6;"></div>
<div class="t" style="left:104.0px;top:15.0px;font-size:22px;color:#f7f7f7;">/</div>
<svg style="left:96px;top:47.5px;" width="28" height="26" viewBox="0 0 28 26"><path d="M0 2.2 Q0 0 2 0 H12 Q13 0 14 1.2 L15.3 2.6 H26 Q28 2.6 28 4.6 V12 H0 Z" fill="#dea83a"/><path d="M0 5 H28 V24 Q28 26 26 26 H2 Q0 26 0 24 Z" fill="#f3c143"/><rect x="0.5" y="26" width="28" height="1" fill="#e3e6ea"/></svg>
<svg style="left:96px;top:43.5px;" width="30" height="36" viewBox="0 0 30 36"><path d="M9.8 12.5 C9.8 6.5 13.2 3.6 17.8 3.6 C22.6 3.6 25.6 6.8 25.6 10.8 C25.6 15.6 18.3 16.8 18.3 22.3 V24.6" stroke="#fff" stroke-width="6.4" fill="none" opacity="0.85"/><circle cx="18.3" cy="30" r="3.8" fill="#fff" opacity="0.85"/><path d="M9.8 12.5 C9.8 6.5 13.2 3.6 17.8 3.6 C22.6 3.6 25.6 6.8 25.6 10.8 C25.6 15.6 18.3 16.8 18.3 22.3 V24.6" stroke="#111" stroke-width="4.2" fill="none"/><circle cx="18.3" cy="30" r="2.7" fill="#111"/></svg>
<div class="t" style="left:135.0px;top:53.0px;font-size:22px;color:#262626;letter-spacing:0.8px;">.composer</div>
<svg style="left:96px;top:85.5px;" width="28" height="26" viewBox="0 0 28 26"><path d="M0 2.2 Q0 0 2 0 H12 Q13 0 14 1.2 L15.3 2.6 H26 Q28 2.6 28 4.6 V12 H0 Z" fill="#dea83a"/><path d="M0 5 H28 V24 Q28 26 26 26 H2 Q0 26 0 24 Z" fill="#f3c143"/><rect x="0.5" y="26" width="28" height="1" fill="#e3e6ea"/></svg>
<svg style="left:96px;top:81.5px;" width="30" height="36" viewBox="0 0 30 36"><path d="M9.8 12.5 C9.8 6.5 13.2 3.6 17.8 3.6 C22.6 3.6 25.6 6.8 25.6 10.8 C25.6 15.6 18.3 16.8 18.3 22.3 V24.6" stroke="#fff" stroke-width="6.4" fill="none" opacity="0.85"/><circle cx="18.3" cy="30" r="3.8" fill="#fff" opacity="0.85"/><path d="M9.8 12.5 C9.8 6.5 13.2 3.6 17.8 3.6 C22.6 3.6 25.6 6.8 25.6 10.8 C25.6 15.6 18.3 16.8 18.3 22.3 V24.6" stroke="#111" stroke-width="4.2" fill="none"/><circle cx="18.3" cy="30" r="2.7" fill="#111"/></svg>
<div class="t" style="left:135.0px;top:91.0px;font-size:22px;color:#262626;letter-spacing:0.8px;">.local</div>
<svg style="left:96px;top:123.5px;" width="28" height="26" viewBox="0 0 28 26"><path d="M0 2.2 Q0 0 2 0 H12 Q13 0 14 1.2 L15.3 2.6 H26 Q28 2.6 28 4.6 V12 H0 Z" fill="#dea83a"/><path d="M0 5 H28 V24 Q28 26 26 26 H2 Q0 26 0 24 Z" fill="#f3c143"/><rect x="0.5" y="26" width="28" height="1" fill="#e3e6ea"/></svg>
<svg style="left:96px;top:119.5px;" width="30" height="36" viewBox="0 0 30 36"><path d="M9.8 12.5 C9.8 6.5 13.2 3.6 17.8 3.6 C22.6 3.6 25.6 6.8 25.6 10.8 C25.6 15.6 18.3 16.8 18.3 22.3 V24.6" stroke="#fff" stroke-width="6.4" fill="none" opacity="0.85"/><circle cx="18.3" cy="30" r="3.8" fill="#fff" opacity="0.85"/><path d="M9.8 12.5 C9.8 6.5 13.2 3.6 17.8 3.6 C22.6 3.6 25.6 6.8 25.6 10.8 C25.6 15.6 18.3 16.8 18.3 22.3 V24.6" stroke="#111" stroke-width="4.2" fill="none"/><circle cx="18.3" cy="30" r="2.7" fill="#111"/></svg>
<div class="t" style="left:135.0px;top:129.0px;font-size:22px;color:#262626;letter-spacing:0.8px;">.opcache</div>
<svg style="left:96px;top:161.5px;" width="28" height="26" viewBox="0 0 28 26"><path d="M0 2.2 Q0 0 2 0 H12 Q13 0 14 1.2 L15.3 2.6 H26 Q28 2.6 28 4.6 V12 H0 Z" fill="#dea83a"/><path d="M0 5 H28 V24 Q28 26 26 26 H2 Q0 26 0 24 Z" fill="#f3c143"/><rect x="0.5" y="26" width="28" height="1" fill="#e3e6ea"/></svg>
<svg style="left:96px;top:157.5px;" width="30" height="36" viewBox="0 0 30 36"><path d="M9.8 12.5 C9.8 6.5 13.2 3.6 17.8 3.6 C22.6 3.6 25.6 6.8 25.6 10.8 C25.6 15.6 18.3 16.8 18.3 22.3 V24.6" stroke="#fff" stroke-width="6.4" fill="none" opacity="0.85"/><circle cx="18.3" cy="30" r="3.8" fill="#fff" opacity="0.85"/><path d="M9.8 12.5 C9.8 6.5 13.2 3.6 17.8 3.6 C22.6 3.6 25.6 6.8 25.6 10.8 C25.6 15.6 18.3 16.8 18.3 22.3 V24.6" stroke="#111" stroke-width="4.2" fill="none"/><circle cx="18.3" cy="30" r="2.7" fill="#111"/></svg>
<div class="t" style="left:135.0px;top:167.0px;font-size:22px;color:#262626;letter-spacing:0.8px;">.subversion</div>
<svg style="left:96px;top:199.5px;" width="28" height="26" viewBox="0 0 28 26"><path d="M0 2.2 Q0 0 2 0 H12 Q13 0 14 1.2 L15.3 2.6 H26 Q28 2.6 28 4.6 V12 H0 Z" fill="#dea83a"/><path d="M0 5 H28 V24 Q28 26 26 26 H2 Q0 26 0 24 Z" fill="#f3c143"/><rect x="0.5" y="26" width="28" height="1" fill="#e3e6ea"/></svg>
<svg style="left:96px;top:195.5px;" width="30" height="36" viewBox="0 0 30 36"><path d="M9.8 12.5 C9.8 6.5 13.2 3.6 17.8 3.6 C22.6 3.6 25.6 6.8 25.6 10.8 C25.6 15.6 18.3 16.8 18.3 22.3 V24.6" stroke="#fff" stroke-width="6.4" fill="none" opacity="0.85"/><circle cx="18.3" cy="30" r="3.8" fill="#fff" opacity="0.85"/><path d="M9.8 12.5 C9.8 6.5 13.2 3.6 17.8 3.6 C22.6 3.6 25.6 6.8 25.6 10.8 C25.6 15.6 18.3 16.8 18.3 22.3 V24.6" stroke="#111" stroke-width="4.2" fill="none"/><circle cx="18.3" cy="30" r="2.7" fill="#111"/></svg>
<div class="t" style="left:135.0px;top:205.0px;font-size:22px;color:#262626;letter-spacing:0.8px;">Example</div>
<svg style="left:96px;top:237.5px;" width="28" height="26" viewBox="0 0 28 26"><path d="M0 2.2 Q0 0 2 0 H12 Q13 0 14 1.2 L15.3 2.6 H26 Q28 2.6 28 4.6 V12 H0 Z" fill="#dea83a"/><path d="M0 5 H28 V24 Q28 26 26 26 H2 Q0 26 0 24 Z" fill="#f3c143"/><rect x="0.5" y="26" width="28" height="1" fill="#e3e6ea"/></svg>
<svg style="left:96px;top:233.5px;" width="30" height="36" viewBox="0 0 30 36"><path d="M9.8 12.5 C9.8 6.5 13.2 3.6 17.8 3.6 C22.6 3.6 25.6 6.8 25.6 10.8 C25.6 15.6 18.3 16.8 18.3 22.3 V24.6" stroke="#fff" stroke-width="6.4" fill="none" opacity="0.85"/><circle cx="18.3" cy="30" r="3.8" fill="#fff" opacity="0.85"/><path d="M9.8 12.5 C9.8 6.5 13.2 3.6 17.8 3.6 C22.6 3.6 25.6 6.8 25.6 10.8 C25.6 15.6 18.3 16.8 18.3 22.3 V24.6" stroke="#111" stroke-width="4.2" fill="none"/><circle cx="18.3" cy="30" r="2.7" fill="#111"/></svg>
<div class="t" style="left:135.0px;top:243.0px;font-size:22px;color:#262626;letter-spacing:0.8px;">_ProviderRestore</div>
<svg style="left:96px;top:275.5px;" width="28" height="26" viewBox="0 0 28 26"><path d="M0 2.2 Q0 0 2 0 H12 Q13 0 14 1.2 L15.3 2.6 H26 Q28 2.6 28 4.6 V12 H0 Z" fill="#dea83a"/><path d="M0 5 H28 V24 Q28 26 26 26 H2 Q0 26 0 24 Z" fill="#f3c143"/><rect x="0.5" y="26" width="28" height="1" fill="#e3e6ea"/></svg>
<svg style="left:96px;top:271.5px;" width="30" height="36" viewBox="0 0 30 36"><path d="M9.8 12.5 C9.8 6.5 13.2 3.6 17.8 3.6 C22.6 3.6 25.6 6.8 25.6 10.8 C25.6 15.6 18.3 16.8 18.3 22.3 V24.6" stroke="#fff" stroke-width="6.4" fill="none" opacity="0.85"/><circle cx="18.3" cy="30" r="3.8" fill="#fff" opacity="0.85"/><path d="M9.8 12.5 C9.8 6.5 13.2 3.6 17.8 3.6 C22.6 3.6 25.6 6.8 25.6 10.8 C25.6 15.6 18.3 16.8 18.3 22.3 V24.6" stroke="#111" stroke-width="4.2" fill="none"/><circle cx="18.3" cy="30" r="2.7" fill="#111"/></svg>
<div class="t" style="left:135.0px;top:281.0px;font-size:22px;color:#262626;letter-spacing:0.8px;">administrator</div>
<svg style="left:96px;top:313.5px;" width="28" height="26" viewBox="0 0 28 26"><path d="M0 2.2 Q0 0 2 0 H12 Q13 0 14 1.2 L15.3 2.6 H26 Q28 2.6 28 4.6 V12 H0 Z" fill="#dea83a"/><path d="M0 5 H28 V24 Q28 26 26 26 H2 Q0 26 0 24 Z" fill="#f3c143"/><rect x="0.5" y="26" width="28" height="1" fill="#e3e6ea"/></svg>
<svg style="left:96px;top:309.5px;" width="30" height="36" viewBox="0 0 30 36"><path d="M9.8 12.5 C9.8 6.5 13.2 3.6 17.8 3.6 C22.6 3.6 25.6 6.8 25.6 10.8 C25.6 15.6 18.3 16.8 18.3 22.3 V24.6" stroke="#fff" stroke-width="6.4" fill="none" opacity="0.85"/><circle cx="18.3" cy="30" r="3.8" fill="#fff" opacity="0.85"/><path d="M9.8 12.5 C9.8 6.5 13.2 3.6 17.8 3.6 C22.6 3.6 25.6 6.8 25.6 10.8 C25.6 15.6 18.3 16.8 18.3 22.3 V24.6" stroke="#111" stroke-width="4.2" fill="none"/><circle cx="18.3" cy="30" r="2.7" fill="#111"/></svg>
<div class="t" style="left:135.0px;top:319.0px;font-size:22px;color:#262626;letter-spacing:0.8px;">alexa</div>
</div>
<div class="r" style="left:0px;top:743px;width:884px;height:8px;background:#ececec;"></div>
<div class="r" style="left:0px;top:742px;width:884px;height:2px;background:#acacac;"></div>
<div class="r" style="left:0px;top:750px;width:884px;height:2px;background:#acacac;"></div>
<div class="r" style="left:894px;top:743px;width:1492px;height:8px;background:#ececec;"></div>
<div class="r" style="left:894px;top:742px;width:1492px;height:2px;background:#acacac;"></div>
<div class="r" style="left:894px;top:750px;width:1492px;height:2px;background:#acacac;"></div>
<div class="r" style="left:0px;top:752px;width:855px;height:463px;overflow:hidden;background:#ffffff">
<div class="r" style="left:0px;top:33px;width:854px;height:1px;background:#dedede;"></div>
<div class="t" style="left:3.5px;top:8.0px;font-size:22px;color:#262626;letter-spacing:0.127px;">Filename</div>
<svg style="left:111px;top:8px;" width="26" height="16" viewBox="0 0 26 16"><path d="M2.5 13.5 L13 3 L23.5 13.5" stroke="#555" stroke-width="3.6" fill="none"/></svg>
<div class="r" style="left:328px;top:6px;width:4px;height:22px;background:#e3e3e3;"></div>
<div class="r" style="left:488px;top:6px;width:4px;height:22px;background:#e3e3e3;"></div>
<div class="r" style="left:728px;top:6px;width:4px;height:22px;background:#e3e3e3;"></div>
<div class="t" style="left:399.0px;top:8.0px;font-size:22px;color:#262626;letter-spacing:0.24px;">Filesize</div>
<div class="t" style="left:503.0px;top:8.0px;font-size:22px;color:#262626;letter-spacing:0.621px;">Filetype</div>
<div class="t" style="left:742.0px;top:8.0px;font-size:22px;color:#262626;letter-spacing:0.743px;">Last modified</div>
<div class="r" style="left:851px;top:1px;width:4px;height:32px;background:#ffffff;"></div>
<svg style="left:-6px;top:42.5px;" width="28" height="26" viewBox="0 0 28 26"><path d="M0 2.2 Q0 0 2 0 H12 Q13 0 14 1.2 L15.3 2.6 H26 Q28 2.6 28 4.6 V12 H0 Z" fill="#dea83a"/><path d="M0 5 H28 V24 Q28 26 26 26 H2 Q0 26 0 24 Z" fill="#f3c143"/><rect x="0.5" y="26" width="28" height="1" fill="#e3e6ea"/></svg>
<div class="t" style="left:35.0px;top:44.0px;font-size:26px;color:#262626;letter-spacing:0.55px;">..</div>
<svg style="left:-6px;top:86.5px;" width="28" height="26" viewBox="0 0 28 26"><path d="M0 2.2 Q0 0 2 0 H12 Q13 0 14 1.2 L15.3 2.6 H26 Q28 2.6 28 4.6 V12 H0 Z" fill="#dea83a"/><path d="M0 5 H28 V24 Q28 26 26 26 H2 Q0 26 0 24 Z" fill="#f3c143"/><rect x="0.5" y="26" width="28" height="1" fill="#e3e6ea"/></svg>
<div class="t" style="left:35.0px;top:88.0px;font-size:26px;color:#262626;letter-spacing:0.55px;">.Trash</div>
<div class="t" style="left:495.0px;top:88.0px;font-size:26px;color:#262626;letter-spacing:0.6px;">Directory</div>
<div class="t" style="left:735.0px;top:88.0px;font-size:26px;color:#262626;letter-spacing:0.6px;">06/05/2025 1...</div>
<svg style="left:-6px;top:130.5px;" width="28" height="26" viewBox="0 0 28 26"><path d="M0 2.2 Q0 0 2 0 H12 Q13 0 14 1.2 L15.3 2.6 H26 Q28 2.6 28 4.6 V12 H0 Z" fill="#dea83a"/><path d="M0 5 H28 V24 Q28 26 26 26 H2 Q0 26 0 24 Z" fill="#f3c143"/><rect x="0.5" y="26" width="28" height="1" fill="#e3e6ea"/></svg>
<div class="t" style="left:35.0px;top:132.0px;font-size:26px;color:#262626;letter-spacing:0.55px;">.android</div>
<div class="t" style="left:495.0px;top:132.0px;font-size:26px;color:#262626;letter-spacing:0.6px;">Directory</div>
<div class="t" style="left:735.0px;top:132.0px;font-size:26px;color:#262626;letter-spacing:0.6px;">08/07/2024 1...</div>
<svg style="left:-6px;top:174.5px;" width="28" height="26" viewBox="0 0 28 26"><path d="M0 2.2 Q0 0 2 0 H12 Q13 0 14 1.2 L15.3 2.6 H26 Q28 2.6 28 4.6 V12 H0 Z" fill="#dea83a"/><path d="M0 5 H28 V24 Q28 26 26 26 H2 Q0 26 0 24 Z" fill="#f3c143"/><rect x="0.5" y="26" width="28" height="1" fill="#e3e6ea"/></svg>
<div class="t" style="left:35.0px;top:176.0px;font-size:26px;color:#262626;letter-spacing:0.55px;">.cache</div>
<div class="t" style="left:495.0px;top:176.0px;font-size:26px;color:#262626;letter-spacing:0.6px;">Directory</div>
<div class="t" style="left:735.0px;top:176.0px;font-size:26px;color:#262626;letter-spacing:0.6px;">01/11/2023 1...</div>
<svg style="left:-6px;top:218.5px;" width="28" height="26" viewBox="0 0 28 26"><path d="M0 2.2 Q0 0 2 0 H12 Q13 0 14 1.2 L15.3 2.6 H26 Q28 2.6 28 4.6 V12 H0 Z" fill="#dea83a"/><path d="M0 5 H28 V24 Q28 26 26 26 H2 Q0 26 0 24 Z" fill="#f3c143"/><rect x="0.5" y="26" width="28" height="1" fill="#e3e6ea"/></svg>
<div class="t" style="left:35.0px;top:220.0px;font-size:26px;color:#262626;letter-spacing:0.55px;">.composer</div>
<div class="t" style="left:495.0px;top:220.0px;font-size:26px;color:#262626;letter-spacing:0.6px;">Directory</div>
<div class="t" style="left:735.0px;top:220.0px;font-size:26px;color:#262626;letter-spacing:0.6px;">13/11/2024 1...</div>
<svg style="left:-6px;top:262.5px;" width="28" height="26" viewBox="0 0 28 26"><path d="M0 2.2 Q0 0 2 0 H12 Q13 0 14 1.2 L15.3 2.6 H26 Q28 2.6 28 4.6 V12 H0 Z" fill="#dea83a"/><path d="M0 5 H28 V24 Q28 26 26 26 H2 Q0 26 0 24 Z" fill="#f3c143"/><rect x="0.5" y="26" width="28" height="1" fill="#e3e6ea"/></svg>
<div class="t" style="left:35.0px;top:264.0px;font-size:26px;color:#262626;letter-spacing:0.55px;">.config</div>
<div class="t" style="left:495.0px;top:264.0px;font-size:26px;color:#262626;letter-spacing:0.6px;">Directory</div>
<div class="t" style="left:735.0px;top:264.0px;font-size:26px;color:#262626;letter-spacing:0.6px;">10/02/2025 1...</div>
<svg style="left:-6px;top:306.5px;" width="28" height="26" viewBox="0 0 28 26"><path d="M0 2.2 Q0 0 2 0 H12 Q13 0 14 1.2 L15.3 2.6 H26 Q28 2.6 28 4.6 V12 H0 Z" fill="#dea83a"/><path d="M0 5 H28 V24 Q28 26 26 26 H2 Q0 26 0 24 Z" fill="#f3c143"/><rect x="0.5" y="26" width="28" height="1" fill="#e3e6ea"/></svg>
<div class="t" style="left:35.0px;top:308.0px;font-size:26px;color:#262626;letter-spacing:0.55px;">.cups</div>
<div class="t" style="left:495.0px;top:308.0px;font-size:26px;color:#262626;letter-spacing:0.6px;">Directory</div>
<div class="t" style="left:735.0px;top:308.0px;font-size:26px;color:#262626;letter-spacing:0.6px;">05/04/2025 1...</div>
<svg style="left:-6px;top:350.5px;" width="28" height="26" viewBox="0 0 28 26"><path d="M0 2.2 Q0 0 2 0 H12 Q13 0 14 1.2 L15.3 2.6 H26 Q28 2.6 28 4.6 V12 H0 Z" fill="#dea83a"/><path d="M0 5 H28 V24 Q28 26 26 26 H2 Q0 26 0 24 Z" fill="#f3c143"/><rect x="0.5" y="26" width="28" height="1" fill="#e3e6ea"/></svg>
<div class="t" style="left:35.0px;top:352.0px;font-size:26px;color:#262626;letter-spacing:0.55px;">.cursor</div>
<div class="t" style="left:495.0px;top:352.0px;font-size:26px;color:#262626;letter-spacing:0.6px;">Directory</div>
<div class="t" style="left:735.0px;top:352.0px;font-size:26px;color:#262626;letter-spacing:0.6px;">30/04/2025 1...</div>
<svg style="left:-6px;top:394.5px;" width="28" height="26" viewBox="0 0 28 26"><path d="M0 2.2 Q0 0 2 0 H12 Q13 0 14 1.2 L15.3 2.6 H26 Q28 2.6 28 4.6 V12 H0 Z" fill="#dea83a"/><path d="M0 5 H28 V24 Q28 26 26 26 H2 Q0 26 0 24 Z" fill="#f3c143"/><rect x="0.5" y="26" width="28" height="1" fill="#e3e6ea"/></svg>
<div class="t" style="left:35.0px;top:396.0px;font-size:26px;color:#262626;letter-spacing:0.55px;">.docker</div>
<div class="t" style="left:495.0px;top:396.0px;font-size:26px;color:#262626;letter-spacing:0.6px;">Directory</div>
<div class="t" style="left:735.0px;top:396.0px;font-size:26px;color:#262626;letter-spacing:0.6px;">17/02/2025 1...</div>
<svg style="left:-6px;top:438.5px;" width="28" height="26" viewBox="0 0 28 26"><path d="M0 2.2 Q0 0 2 0 H12 Q13 0 14 1.2 L15.3 2.6 H26 Q28 2.6 28 4.6 V12 H0 Z" fill="#dea83a"/><path d="M0 5 H28 V24 Q28 26 26 26 H2 Q0 26 0 24 Z" fill="#f3c143"/><rect x="0.5" y="26" width="28" height="1" fill="#e3e6ea"/></svg>
<div class="t" style="left:35.0px;top:440.0px;font-size:26px;color:#262626;letter-spacing:0.55px;">.gradle</div>
<div class="t" style="left:495.0px;top:440.0px;font-size:26px;color:#262626;letter-spacing:0.6px;">Directory</div>
<div class="t" style="left:735.0px;top:440.0px;font-size:26px;color:#262626;letter-spacing:0.6px;">08/07/2024 1...</div>
</div>
<div class="r" style="left:854px;top:752px;width:30px;height:463px;background:#f9f9f9;"></div>
<div class="r" style="left:854px;top:752px;width:1px;height:463px;background:#e6e6e6;"></div>
<div class="r" style="left:862px;top:758px;width:16px;height:50px;background:#808080;border-radius:8px;"></div>
<div class="r" style="left:0px;top:1215px;width:856px;height:27px;background:#f9f9f9;"></div>
<div class="r" style="left:0px;top:1215px;width:856px;height:1px;background:#e6e6e6;"></div>
<div class="r" style="left:0px;top:1222px;width:742px;height:16px;background:#808080;border-radius:8px;"></div>
<div class="r" style="left:856px;top:1215px;width:28px;height:27px;background:#efefef;"></div>
<div class="r" style="left:894px;top:752px;width:1492px;height:492px;overflow:hidden;background:#ffffff">
<div class="r" style="left:0px;top:33px;width:1466px;height:1px;background:#dedede;"></div>
<div class="r" style="left:0px;top:6px;width:2px;height:22px;background:#e3e3e3;"></div>
<div class="t" style="left:13.0px;top:8.0px;font-size:22px;color:#262626;letter-spacing:0.127px;">Filename</div>
<svg style="left:121.5px;top:8px;" width="26" height="16" viewBox="0 0 26 16"><path d="M2.5 13.5 L13 3 L23.5 13.5" stroke="#555" stroke-width="3.6" fill="none"/></svg>
<div class="r" style="left:298px;top:6px;width:4px;height:22px;background:#e3e3e3;"></div>
<div class="r" style="left:448px;top:6px;width:4px;height:22px;background:#e3e3e3;"></div>
<div class="r" style="left:608px;top:6px;width:4px;height:22px;background:#e3e3e3;"></div>
<div class="r" style="left:808px;top:6px;width:4px;height:22px;background:#e3e3e3;"></div>
<div class="r" style="left:967px;top:6px;width:4px;height:22px;background:#e3e3e3;"></div>
<div class="r" style="left:1137px;top:6px;width:4px;height:22px;background:#e3e3e3;"></div>
<div class="t" style="left:359.0px;top:8.0px;font-size:22px;color:#262626;letter-spacing:0.24px;">Filesize</div>
<div class="t" style="left:462.5px;top:8.0px;font-size:22px;color:#262626;letter-spacing:0.621px;">Filetype</div>
<div class="t" style="left:623.0px;top:8.0px;font-size:22px;color:#262626;letter-spacing:0.743px;">Last modified</div>
<div class="t" style="left:823.0px;top:8.0px;font-size:22px;color:#262626;letter-spacing:0.426px;">Permissions</div>
<div class="t" style="left:983.0px;top:8.0px;font-size:22px;color:#262626;letter-spacing:0.45px;">Owner/Group</div>
<svg style="left:3.5px;top:41.5px;" width="28" height="26" viewBox="0 0 28 26"><path d="M0 2.2 Q0 0 2 0 H12 Q13 0 14 1.2 L15.3 2.6 H26 Q28 2.6 28 4.6 V12 H0 Z" fill="#dea83a"/><path d="M0 5 H28 V24 Q28 26 26 26 H2 Q0 26 0 24 Z" fill="#f3c143"/><rect x="0.5" y="26" width="28" height="1" fill="#e3e6ea"/></svg>
<div class="t" style="left:45.0px;top:44.0px;font-size:26px;color:#262626;letter-spacing:0.55px;">..</div>
<svg style="left:3.5px;top:85.5px;" width="28" height="26" viewBox="0 0 28 26"><path d="M0 2.2 Q0 0 2 0 H12 Q13 0 14 1.2 L15.3 2.6 H26 Q28 2.6 28 4.6 V12 H0 Z" fill="#dea83a"/><path d="M0 5 H28 V24 Q28 26 26 26 H2 Q0 26 0 24 Z" fill="#f3c143"/><rect x="0.5" y="26" width="28" height="1" fill="#e3e6ea"/></svg>
<div class="t" style="left:45.0px;top:88.0px;font-size:26px;color:#262626;letter-spacing:0.55px;">.composer</div>
<div class="t" style="left:454.5px;top:88.0px;font-size:26px;color:#262626;letter-spacing:0.667px;">Directory</div>
<div class="t" style="left:615.3px;top:88.0px;font-size:26px;color:#262626;letter-spacing:0.474px;">23/05/2024 1...</div>
<div class="t" style="left:815.0px;top:88.0px;font-size:26px;color:#262626;letter-spacing:1.583px;">drwx---r-x</div>
<div class="t" style="left:975.0px;top:88.0px;font-size:26px;color:#262626;letter-spacing:0.618px;">11055609 ...</div>
<svg style="left:3.5px;top:129.5px;" width="28" height="26" viewBox="0 0 28 26"><path d="M0 2.2 Q0 0 2 0 H12 Q13 0 14 1.2 L15.3 2.6 H26 Q28 2.6 28 4.6 V12 H0 Z" fill="#dea83a"/><path d="M0 5 H28 V24 Q28 26 26 26 H2 Q0 26 0 24 Z" fill="#f3c143"/><rect x="0.5" y="26" width="28" height="1" fill="#e3e6ea"/></svg>
<div class="t" style="left:45.0px;top:132.0px;font-size:26px;color:#262626;letter-spacing:0.55px;">.local</div>
<div class="t" style="left:454.5px;top:132.0px;font-size:26px;color:#262626;letter-spacing:0.667px;">Directory</div>
<div class="t" style="left:615.3px;top:132.0px;font-size:26px;color:#262626;letter-spacing:0.474px;">20/08/2024 1...</div>
<div class="t" style="left:815.0px;top:132.0px;font-size:26px;color:#262626;letter-spacing:1.583px;">drwx---r-x</div>
<div class="t" style="left:975.0px;top:132.0px;font-size:26px;color:#262626;letter-spacing:0.618px;">11055609 ...</div>
<svg style="left:3.5px;top:173.5px;" width="28" height="26" viewBox="0 0 28 26"><path d="M0 2.2 Q0 0 2 0 H12 Q13 0 14 1.2 L15.3 2.6 H26 Q28 2.6 28 4.6 V12 H0 Z" fill="#dea83a"/><path d="M0 5 H28 V24 Q28 26 26 26 H2 Q0 26 0 24 Z" fill="#f3c143"/><rect x="0.5" y="26" width="28" height="1" fill="#e3e6ea"/></svg>
<div class="t" style="left:45.0px;top:176.0px;font-size:26px;color:#262626;letter-spacing:0.55px;">.opcache</div>
<div class="t" style="left:454.5px;top:176.0px;font-size:26px;color:#262626;letter-spacing:0.667px;">Directory</div>
<div class="t" style="left:615.3px;top:176.0px;font-size:26px;color:#262626;letter-spacing:1.023px;">08/05/2025 0..</div>
<div class="t" style="left:815.0px;top:176.0px;font-size:26px;color:#262626;letter-spacing:0.836px;">drwxrwxr-x</div>
<div class="t" style="left:975.0px;top:176.0px;font-size:26px;color:#262626;letter-spacing:1.203px;">43 600</div>
<svg style="left:3.5px;top:217.5px;" width="28" height="26" viewBox="0 0 28 26"><path d="M0 2.2 Q0 0 2 0 H12 Q13 0 14 1.2 L15.3 2.6 H26 Q28 2.6 28 4.6 V12 H0 Z" fill="#dea83a"/><path d="M0 5 H28 V24 Q28 26 26 26 H2 Q0 26 0 24 Z" fill="#f3c143"/><rect x="0.5" y="26" width="28" height="1" fill="#e3e6ea"/></svg>
<div class="t" style="left:45.0px;top:220.0px;font-size:26px;color:#262626;letter-spacing:0.55px;">.subversion</div>
<div class="t" style="left:454.5px;top:220.0px;font-size:26px;color:#262626;letter-spacing:0.667px;">Directory</div>
<div class="t" style="left:615.3px;top:220.0px;font-size:26px;color:#262626;letter-spacing:0.474px;">19/08/2024 1...</div>
<div class="t" style="left:815.0px;top:220.0px;font-size:26px;color:#262626;letter-spacing:1.583px;">drwx---r-x</div>
<div class="t" style="left:975.0px;top:220.0px;font-size:26px;color:#262626;letter-spacing:0.618px;">11055609 ...</div>
<svg style="left:3.5px;top:261.5px;" width="28" height="26" viewBox="0 0 28 26"><path d="M0 2.2 Q0 0 2 0 H12 Q13 0 14 1.2 L15.3 2.6 H26 Q28 2.6 28 4.6 V12 H0 Z" fill="#dea83a"/><path d="M0 5 H28 V24 Q28 26 26 26 H2 Q0 26 0 24 Z" fill="#f3c143"/><rect x="0.5" y="26" width="28" height="1" fill="#e3e6ea"/></svg>
<div class="t" style="left:45.0px;top:264.0px;font-size:26px;color:#262626;letter-spacing:0.55px;">Example</div>
<div class="t" style="left:454.5px;top:264.0px;font-size:26px;color:#262626;letter-spacing:0.667px;">Directory</div>
<div class="t" style="left:615.3px;top:264.0px;font-size:26px;color:#262626;letter-spacing:0.474px;">25/09/2024 1...</div>
<div class="t" style="left:815.0px;top:264.0px;font-size:26px;color:#262626;letter-spacing:1.583px;">drwx---r-x</div>
<div class="t" style="left:975.0px;top:264.0px;font-size:26px;color:#262626;letter-spacing:0.618px;">11055609 ...</div>
<svg style="left:3.5px;top:305.5px;" width="28" height="26" viewBox="0 0 28 26"><path d="M0 2.2 Q0 0 2 0 H12 Q13 0 14 1.2 L15.3 2.6 H26 Q28 2.6 28 4.6 V12 H0 Z" fill="#dea83a"/><path d="M0 5 H28 V24 Q28 26 26 26 H2 Q0 26 0 24 Z" fill="#f3c143"/><rect x="0.5" y="26" width="28" height="1" fill="#e3e6ea"/></svg>
<div class="t" style="left:45.0px;top:308.0px;font-size:26px;color:#262626;letter-spacing:0.55px;">_ProviderRestore</div>
<div class="t" style="left:454.5px;top:308.0px;font-size:26px;color:#262626;letter-spacing:0.667px;">Directory</div>
<div class="t" style="left:615.3px;top:308.0px;font-size:26px;color:#262626;letter-spacing:0.474px;">16/05/2022 1...</div>
<div class="t" style="left:815.0px;top:308.0px;font-size:26px;color:#262626;letter-spacing:2.177px;">drwx------</div>
<div class="t" style="left:975.0px;top:308.0px;font-size:26px;color:#262626;letter-spacing:0.618px;">11055609 ...</div>
<svg style="left:3.5px;top:349.5px;" width="28" height="26" viewBox="0 0 28 26"><path d="M0 2.2 Q0 0 2 0 H12 Q13 0 14 1.2 L15.3 2.6 H26 Q28 2.6 28 4.6 V12 H0 Z" fill="#dea83a"/><path d="M0 5 H28 V24 Q28 26 26 26 H2 Q0 26 0 24 Z" fill="#f3c143"/><rect x="0.5" y="26" width="28" height="1" fill="#e3e6ea"/></svg>
<div class="t" style="left:45.0px;top:352.0px;font-size:26px;color:#262626;letter-spacing:0.55px;">administrator</div>
<div class="t" style="left:454.5px;top:352.0px;font-size:26px;color:#262626;letter-spacing:0.667px;">Directory</div>
<div class="t" style="left:615.3px;top:352.0px;font-size:26px;color:#262626;letter-spacing:-0.339px;">21/01/2019 11...</div>
<div class="t" style="left:815.0px;top:352.0px;font-size:26px;color:#262626;letter-spacing:1.583px;">drwx---r-x</div>
<div class="t" style="left:975.0px;top:352.0px;font-size:26px;color:#262626;letter-spacing:0.618px;">11055609 ...</div>
<svg style="left:3.5px;top:393.5px;" width="28" height="26" viewBox="0 0 28 26"><path d="M0 2.2 Q0 0 2 0 H12 Q13 0 14 1.2 L15.3 2.6 H26 Q28 2.6 28 4.6 V12 H0 Z" fill="#dea83a"/><path d="M0 5 H28 V24 Q28 26 26 26 H2 Q0 26 0 24 Z" fill="#f3c143"/><rect x="0.5" y="26" width="28" height="1" fill="#e3e6ea"/></svg>
<div class="t" style="left:45.0px;top:396.0px;font-size:26px;color:#262626;letter-spacing:0.55px;">alexa</div>
<div class="t" style="left:454.5px;top:396.0px;font-size:26px;color:#262626;letter-spacing:0.667px;">Directory</div>
<div class="t" style="left:615.3px;top:396.0px;font-size:26px;color:#262626;letter-spacing:0.474px;">25/09/2024 1...</div>
<div class="t" style="left:815.0px;top:396.0px;font-size:26px;color:#262626;letter-spacing:0.948px;">drwxr-xr-x</div>
<div class="t" style="left:975.0px;top:396.0px;font-size:26px;color:#262626;letter-spacing:0.618px;">11055609 ...</div>
<svg style="left:3.5px;top:437.5px;" width="28" height="26" viewBox="0 0 28 26"><path d="M0 2.2 Q0 0 2 0 H12 Q13 0 14 1.2 L15.3 2.6 H26 Q28 2.6 28 4.6 V12 H0 Z" fill="#dea83a"/><path d="M0 5 H28 V24 Q28 26 26 26 H2 Q0 26 0 24 Z" fill="#f3c143"/><rect x="0.5" y="26" width="28" height="1" fill="#e3e6ea"/></svg>
<div class="t" style="left:45.0px;top:440.0px;font-size:26px;color:#262626;letter-spacing:0.55px;">clickandbuilds</div>
<div class="t" style="left:454.5px;top:440.0px;font-size:26px;color:#262626;letter-spacing:0.667px;">Directory</div>
<div class="t" style="left:615.3px;top:440.0px;font-size:26px;color:#262626;letter-spacing:0.474px;">02/10/2024 1...</div>
<div class="t" style="left:815.0px;top:440.0px;font-size:26px;color:#262626;letter-spacing:0.948px;">drwxr-xr-x</div>
<div class="t" style="left:975.0px;top:440.0px;font-size:26px;color:#262626;letter-spacing:0.618px;">11055609 ...</div>
<svg style="left:3.5px;top:481.5px;" width="28" height="26" viewBox="0 0 28 26"><path d="M0 2.2 Q0 0 2 0 H12 Q13 0 14 1.2 L15.3 2.6 H26 Q28 2.6 28 4.6 V12 H0 Z" fill="#dea83a"/><path d="M0 5 H28 V24 Q28 26 26 26 H2 Q0 26 0 24 Z" fill="#f3c143"/><rect x="0.5" y="26" width="28" height="1" fill="#e3e6ea"/></svg>
<div class="t" style="left:45.0px;top:484.0px;font-size:26px;color:#262626;letter-spacing:0.55px;">clientdomains</div>
<div class="t" style="left:454.5px;top:484.0px;font-size:26px;color:#262626;letter-spacing:0.667px;">Directory</div>
<div class="t" style="left:615.3px;top:484.0px;font-size:26px;color:#262626;letter-spacing:0.474px;">13/09/2023 1...</div>
<div class="t" style="left:815.0px;top:484.0px;font-size:26px;color:#262626;letter-spacing:0.948px;">drwxr-xr-x</div>
<div class="t" style="left:975.0px;top:484.0px;font-size:26px;color:#262626;letter-spacing:0.618px;">11055609 ...</div>
<div class="r" style="left:1466px;top:0px;width:26px;height:492px;background:#f9f9f9;"></div>
<div class="r" style="left:1466px;top:0px;width:1px;height:492px;background:#e6e6e6;"></div>
<div class="r" style="left:1474px;top:6px;width:16px;height:298px;background:#808080;border-radius:8px;"></div>
</div>
<div class="r" style="left:0px;top:1242px;width:884px;height:44px;background:#efefef;"></div>
<div class="r" style="left:894px;top:1244px;width:1492px;height:42px;background:#efefef;"></div>
<div class="r" style="left:0px;top:1286px;width:2386px;height:2px;background:#b0b0b0;"></div>
<div class="t" style="left:0.0px;top:1252.0px;font-size:26px;color:#262626;letter-spacing:0.66px;">27 files and 47 directories. Total size: 94,302 bytes</div>
<div class="t" style="left:905.0px;top:1252.0px;font-size:26px;color:#262626;letter-spacing:0.5px;">4 files and 11 directories. Total size: 2,996,128 bytes</div>
</body></html>
